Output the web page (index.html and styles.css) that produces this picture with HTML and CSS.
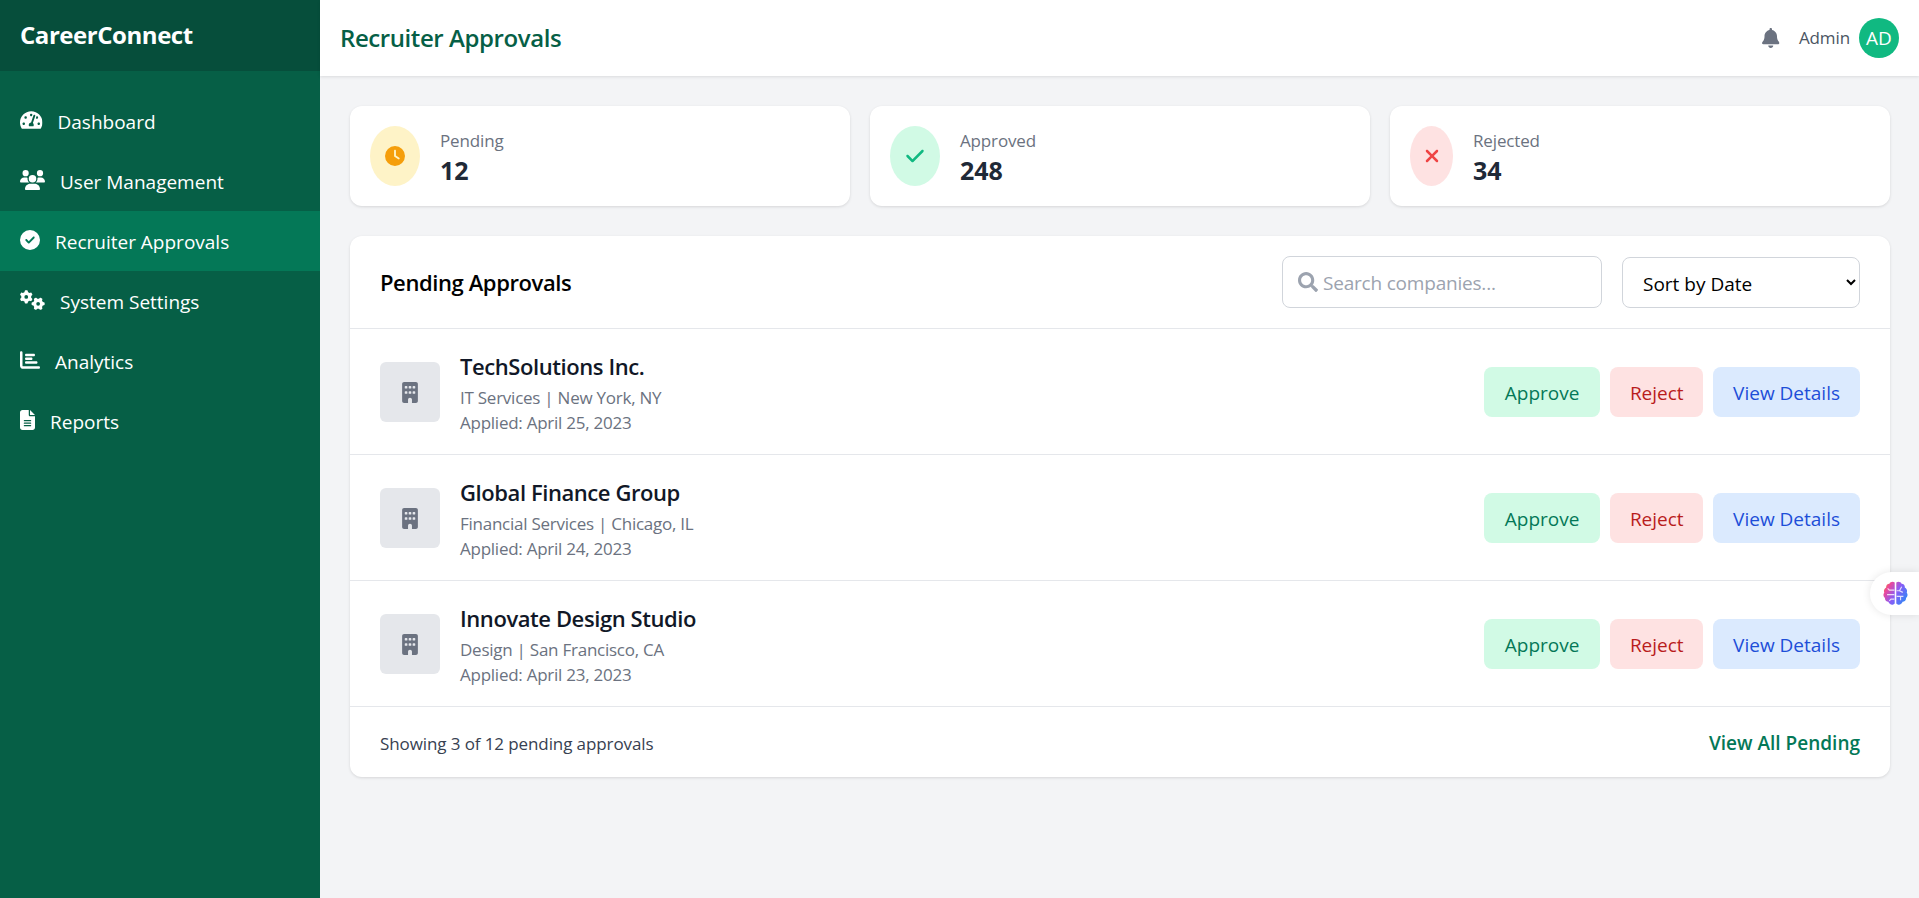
FILE: index.html
```html
<!DOCTYPE html>
<html lang="en">
<head>
  <meta charset="UTF-8">
  <title>Recruiter Approvals</title>
  <link rel="stylesheet" href="styles.css">
</head>
<body>

<svg class="icon-defs" width="0" height="0">
  <defs>
    <linearGradient id="brainFill" x1="0" y1="0" x2="1" y2="0.6">
      <stop offset="0" stop-color="#f59e0b"/>
      <stop offset="0.25" stop-color="#ec4899"/>
      <stop offset="0.6" stop-color="#8b5cf6"/>
      <stop offset="1" stop-color="#3b82f6"/>
    </linearGradient>
    <symbol id="i-gauge" viewBox="0 0 576 512"><path d="M288 32C128.94 32 0 160.94 0 320c0 52.8 14.25 102.26 39.06 144.8 5.61 9.62 16.3 15.2 27.44 15.2h443c11.14 0 21.83-5.58 27.44-15.2C561.75 422.26 576 372.8 576 320c0-159.06-128.94-288-288-288zm0 64c14.71 0 26.58 10.13 30.32 23.65-1.11 2.26-2.64 4.23-3.45 6.67l-9.22 27.67c-5.13 3.49-10.97 6.01-17.64 6.01-17.67 0-32-14.33-32-32S270.33 96 288 96zM96 384c-17.67 0-32-14.33-32-32s14.33-32 32-32 32 14.33 32 32-14.33 32-32 32zm48-160c-17.67 0-32-14.33-32-32s14.33-32 32-32 32 14.33 32 32-14.33 32-32 32zm246.77-72.41l-61.33 184C343.13 347.33 352 364.54 352 384c0 11.72-3.38 22.55-8.88 32H232.88c-5.5-9.45-8.88-20.28-8.88-32 0-33.94 26.5-61.43 59.9-63.59l61.34-184.01c4.17-12.56 17.73-19.45 30.36-15.17 12.57 4.19 19.35 17.79 15.17 30.36zm14.66 57.2l15.52-46.55c3.47-1.29 7.13-2.23 11.05-2.23 17.67 0 32 14.33 32 32s-14.33 32-32 32c-11.38-.01-20.89-6.28-26.57-15.22zM480 384c-17.67 0-32-14.33-32-32s14.33-32 32-32 32 14.33 32 32-14.33 32-32 32z"/></symbol>
    <symbol id="i-users" viewBox="0 0 640 512"><path d="M144 0a80 80 0 1 1 0 160A80 80 0 1 1 144 0zM512 0a80 80 0 1 1 0 160A80 80 0 1 1 512 0zM0 298.700C0 239.800 47.800 192 106.700 192h42.700c15.900 0 31 3.500 44.600 9.700c-1.300 7.200-1.900 14.700-1.900 22.300c0 38.200 16.800 72.500 43.300 96c-.2 0-.4 0-.7 0H21.300C9.600 320 0 310.400 0 298.700zM405.300 320c-.2 0-.4 0-.7 0c26.600-23.500 43.300-57.800 43.300-96c0-7.600-.7-15-1.900-22.300c13.600-6.300 28.700-9.700 44.600-9.700h42.700C592.200 192 640 239.800 640 298.700c0 11.800-9.600 21.300-21.300 21.300H405.300zM224 224a96 96 0 1 1 192 0 96 96 0 1 1 -192 0zM128 485.300C128 411.700 187.700 352 261.300 352H378.700C452.300 352 512 411.700 512 485.300c0 14.700-11.900 26.700-26.700 26.700H154.700c-14.700 0-26.700-11.900-26.700-26.700z"/></symbol>
    <symbol id="i-circle-check" viewBox="0 0 512 512"><path d="M256 512A256 256 0 1 0 256 0a256 256 0 1 0 0 512zM369 209L241 337c-9.4 9.4-24.6 9.4-33.9 0l-64-64c-9.4-9.4-9.4-24.6 0-33.9s24.6-9.4 33.9 0l47 47L335 175c9.4-9.4 24.6-9.4 33.9 0s9.4 24.6 0 33.9z"/></symbol>
    <symbol id="i-gears" viewBox="0 0 640 512"><path d="M308.500 135.300c7.100-6.300 9.900-16.200 6.200-25c-2.300-5.300-4.800-10.500-7.600-15.500L304 89.400c-3-5-6.300-9.900-9.800-14.600c-5.700-7.600-15.700-10.100-24.700-7.100l-28.200 9.300c-10.700-8.800-23-16-36.200-20.900L199 27.100c-1.900-9.300-9.100-16.700-18.500-17.800C173.900 8.400 167.200 8 160.400 8h-.7c-6.800 0-13.500 .4-20.100 1.200c-9.400 1.100-16.600 8.600-18.500 17.800L115 56.100c-13.300 5-25.500 12.100-36.200 20.900L50.500 67.800c-9-3-19-.5-24.700 7.100c-3.500 4.700-6.800 9.600-9.900 14.600l-3 5.300c-2.800 5-5.300 10.200-7.600 15.600c-3.700 8.700-.9 18.600 6.200 25l22.200 19.800C32.600 161.900 32 168.900 32 176s.6 14.100 1.700 20.900L11.500 216.700c-7.100 6.300-9.900 16.200-6.200 25c2.300 5.300 4.800 10.500 7.600 15.600l3 5.200c3 5.100 6.300 9.900 9.900 14.600c5.700 7.600 15.700 10.100 24.700 7.100l28.200-9.300c10.700 8.800 23 16 36.200 20.900l6.100 29.100c1.900 9.300 9.100 16.700 18.500 17.800c6.700 .8 13.500 1.200 20.400 1.200s13.700-.4 20.400-1.200c9.400-1.100 16.600-8.600 18.500-17.800l6.100-29.100c13.300-5 25.500-12.100 36.200-20.900l28.200 9.300c9 3 19 .5 24.700-7.100c3.500-4.700 6.800-9.500 9.800-14.600l3.100-5.400c2.800-5 5.300-10.200 7.600-15.500c3.700-8.700 .9-18.600-6.200-25l-22.200-19.800c1.100-6.800 1.700-13.800 1.700-20.900s-.6-14.100-1.700-20.900l22.200-19.800zM112 176a48 48 0 1 1 96 0 48 48 0 1 1 -96 0zM504.700 500.500c6.300 7.100 16.200 9.900 25 6.200c5.300-2.300 10.500-4.800 15.500-7.600l5.400-3.100c5-3 9.900-6.300 14.600-9.800c7.600-5.700 10.100-15.700 7.100-24.700l-9.300-28.200c8.800-10.700 16-23 20.900-36.200l29.100-6.100c9.300-1.900 16.700-9.100 17.800-18.500c.8-6.700 1.200-13.500 1.200-20.400s-.4-13.700-1.200-20.400c-1.100-9.400-8.600-16.600-17.800-18.500L583.900 307c-5-13.300-12.100-25.500-20.900-36.200l9.300-28.200c3-9 .5-19-7.100-24.700c-4.700-3.500-9.600-6.800-14.600-9.900l-5.300-3c-5-2.800-10.200-5.300-15.600-7.600c-8.700-3.700-18.600-.9-25 6.200l-19.800 22.200c-6.800-1.100-13.800-1.700-20.900-1.700s-14.100 .6-20.900 1.700l-19.800-22.200c-6.300-7.100-16.200-9.900-25-6.200c-5.300 2.300-10.500 4.800-15.600 7.600l-5.200 3c-5.100 3-9.900 6.300-14.600 9.900c-7.600 5.700-10.100 15.700-7.100 24.700l9.300 28.200c-8.800 10.700-16 23-20.900 36.200L315.100 313c-9.300 1.900-16.700 9.100-17.800 18.500c-.8 6.700-1.200 13.500-1.200 20.400s.4 13.700 1.200 20.400c1.100 9.400 8.600 16.600 17.800 18.500l29.100 6.100c5 13.300 12.100 25.500 20.900 36.200l-9.300 28.200c-3 9-.5 19 7.100 24.700c4.700 3.500 9.500 6.800 14.600 9.800l5.400 3.100c5 2.800 10.200 5.300 15.500 7.600c8.700 3.700 18.600 .9 25-6.200l19.800-22.200c6.800 1.100 13.800 1.700 20.900 1.700s14.100-.6 20.900-1.700l19.800 22.200zM464 304a48 48 0 1 1 0 96 48 48 0 1 1 0-96z"/></symbol>
    <symbol id="i-chart" viewBox="0 0 512 512"><path d="M32 32c17.700 0 32 14.300 32 32V400c0 8.800 7.200 16 16 16H480c17.700 0 32 14.300 32 32s-14.300 32-32 32H80c-44.200 0-80-35.800-80-80V64C0 46.300 14.300 32 32 32zm96 96c0-17.700 14.300-32 32-32l192 0c17.700 0 32 14.300 32 32s-14.300 32-32 32l-192 0c-17.700 0-32-14.300-32-32zm32 64H288c17.700 0 32 14.300 32 32s-14.300 32-32 32H160c-17.700 0-32-14.300-32-32s14.300-32 32-32zm0 96H416c17.700 0 32 14.300 32 32s-14.300 32-32 32H160c-17.700 0-32-14.300-32-32s14.300-32 32-32z"/></symbol>
    <symbol id="i-file" viewBox="0 0 384 512"><path d="M64 0C28.700 0 0 28.700 0 64V448c0 35.300 28.700 64 64 64H320c35.300 0 64-28.700 64-64V160H256c-17.700 0-32-14.300-32-32V0H64zM256 0V128H384L256 0zM112 256H272c8.800 0 16 7.200 16 16s-7.200 16-16 16H112c-8.800 0-16-7.200-16-16s7.200-16 16-16zm0 64H272c8.800 0 16 7.200 16 16s-7.200 16-16 16H112c-8.800 0-16-7.200-16-16s7.200-16 16-16zm0 64H272c8.800 0 16 7.200 16 16s-7.200 16-16 16H112c-8.800 0-16-7.200-16-16s7.200-16 16-16z"/></symbol>
    <symbol id="i-bell" viewBox="0 0 448 512"><path d="M224 0c-17.700 0-32 14.300-32 32V51.200C119 66 64 130.600 64 208v18.800c0 47-17.300 92.400-48.500 127.600l-7.400 8.300c-8.400 9.400-10.400 22.900-5.300 34.400S19.400 416 32 416H416c12.600 0 24-7.400 29.200-18.900s3.100-25-5.300-34.400l-7.400-8.300C401.300 319.200 384 273.900 384 226.800V208c0-77.400-55-142-128-156.800V32c0-17.700-14.300-32-32-32zm45.300 493.300c12-12 18.700-28.300 18.700-45.300H224 160c0 17 6.700 33.300 18.700 45.300s28.300 18.700 45.300 18.700s33.300-6.700 45.300-18.700z"/></symbol>
    <symbol id="i-clock" viewBox="0 0 512 512"><path d="M256 0a256 256 0 1 1 0 512A256 256 0 1 1 256 0zM232 120V256c0 8 4 15.500 10.700 20l96 64c11 7.400 25.900 4.400 33.300-6.700s4.400-25.900-6.700-33.300L280 243.200V120c0-13.300-10.700-24-24-24s-24 10.700-24 24z"/></symbol>
    <symbol id="i-check" viewBox="0 0 448 512"><path d="M438.600 105.400c12.500 12.500 12.500 32.800 0 45.300l-256 256c-12.500 12.500-32.800 12.500-45.300 0l-128-128c-12.500-12.500-12.500-32.800 0-45.300s32.800-12.500 45.300 0L160 338.700 393.400 105.400c12.500-12.500 32.800-12.500 45.300 0z"/></symbol>
    <symbol id="i-xmark" viewBox="0 0 384 512"><path d="M342.600 150.600c12.500-12.500 12.500-32.800 0-45.300s-32.800-12.500-45.300 0L192 210.700 86.600 105.400c-12.500-12.500-32.800-12.500-45.300 0s-12.500 32.800 0 45.300L146.700 256 41.400 361.400c-12.500 12.500-12.500 32.800 0 45.300s32.800 12.500 45.300 0L192 301.300 297.400 406.600c12.500 12.500 32.800 12.500 45.300 0s12.500-32.800 0-45.300L237.300 256 342.600 150.600z"/></symbol>
    <symbol id="i-search" viewBox="0 0 512 512"><path d="M505 442.700L405.300 343c-4.500-4.500-10.600-7-17-7H372c27.600-35.300 44-79.700 44-128C416 93.100 322.900 0 208 0S0 93.100 0 208s93.100 208 208 208c48.300 0 92.700-16.400 128-44v16.300c0 6.400 2.500 12.500 7 17l99.700 99.700c9.400 9.400 24.600 9.400 33.900 0l28.300-28.300c9.400-9.400 9.400-24.600.1-34zM208 336c-70.700 0-128-57.200-128-128 0-70.700 57.200-128 128-128 70.700 0 128 57.200 128 128 0 70.700-57.200 128-128 128z"/></symbol>
    <symbol id="i-building" viewBox="0 0 384 512"><path d="M48 0C21.500 0 0 21.500 0 48V464c0 26.500 21.500 48 48 48h96V432c0-26.500 21.500-48 48-48s48 21.500 48 48v80h96c26.500 0 48-21.500 48-48V48c0-26.500-21.500-48-48-48H48zM64 240c0-8.800 7.200-16 16-16h32c8.800 0 16 7.200 16 16v32c0 8.800-7.200 16-16 16H80c-8.800 0-16-7.200-16-16V240zm112-16h32c8.800 0 16 7.200 16 16v32c0 8.800-7.200 16-16 16H176c-8.800 0-16-7.200-16-16V240c0-8.800 7.200-16 16-16zm80 16c0-8.800 7.200-16 16-16h32c8.800 0 16 7.200 16 16v32c0 8.800-7.200 16-16 16H272c-8.800 0-16-7.200-16-16V240zM80 96h32c8.800 0 16 7.200 16 16v32c0 8.800-7.200 16-16 16H80c-8.800 0-16-7.200-16-16V112c0-8.800 7.200-16 16-16zm80 16c0-8.800 7.200-16 16-16h32c8.800 0 16 7.200 16 16v32c0 8.800-7.200 16-16 16H176c-8.800 0-16-7.200-16-16V112zM272 96h32c8.800 0 16 7.200 16 16v32c0 8.800-7.200 16-16 16H272c-8.800 0-16-7.200-16-16V112c0-8.800 7.200-16 16-16z"/></symbol>
  </defs>
</svg>

<div class="layout">
  <aside class="sidebar">
    <div class="brand">CareerConnect</div>
    <nav class="nav">
      <a class="nav-item"><svg class="nav-icon wide-s"><use href="#i-gauge"/></svg>Dashboard</a>
      <a class="nav-item"><svg class="nav-icon wide-l"><use href="#i-users"/></svg>User Management</a>
      <a class="nav-item active"><svg class="nav-icon"><use href="#i-circle-check"/></svg>Recruiter Approvals</a>
      <a class="nav-item"><svg class="nav-icon wide-l"><use href="#i-gears"/></svg>System Settings</a>
      <a class="nav-item"><svg class="nav-icon"><use href="#i-chart"/></svg>Analytics</a>
      <a class="nav-item"><svg class="nav-icon narrow"><use href="#i-file"/></svg>Reports</a>
    </nav>
  </aside>

  <div class="content">
    <header class="topbar">
      <h1 class="page-title">Recruiter Approvals</h1>
      <div class="topbar-right">
        <svg class="bell"><use href="#i-bell"/></svg>
        <div class="user">
          <span class="user-name">Admin</span>
          <span class="avatar">AD</span>
        </div>
      </div>
    </header>

    <main class="main">
      <section class="stats">
        <div class="stat-card">
          <div class="stat-icon pending"><svg><use href="#i-clock"/></svg></div>
          <div class="stat-text">
            <div class="stat-label">Pending</div>
            <div class="stat-value">12</div>
          </div>
        </div>
        <div class="stat-card">
          <div class="stat-icon approved"><svg><use href="#i-check"/></svg></div>
          <div class="stat-text">
            <div class="stat-label">Approved</div>
            <div class="stat-value">248</div>
          </div>
        </div>
        <div class="stat-card">
          <div class="stat-icon rejected"><svg><use href="#i-xmark"/></svg></div>
          <div class="stat-text">
            <div class="stat-label">Rejected</div>
            <div class="stat-value">34</div>
          </div>
        </div>
      </section>

      <section class="panel">
        <div class="panel-header">
          <h2 class="panel-title">Pending Approvals</h2>
          <div class="panel-tools">
            <label class="search">
              <svg class="search-icon"><use href="#i-search"/></svg>
              <input type="text" placeholder="Search companies...">
            </label>
            <select class="sort">
              <option>Sort by Date</option>
              <option>Sort by Name</option>
            </select>
          </div>
        </div>

        <div class="row">
          <div class="logo"><svg><use href="#i-building"/></svg></div>
          <div class="company">
            <h3 class="company-name">TechSolutions Inc.</h3>
            <p class="company-meta">IT Services | New York, NY</p>
            <p class="company-meta">Applied: April 25, 2023</p>
          </div>
          <div class="actions">
            <button class="btn btn-approve">Approve</button>
            <button class="btn btn-reject">Reject</button>
            <button class="btn btn-view">View Details</button>
          </div>
        </div>

        <div class="row">
          <div class="logo"><svg><use href="#i-building"/></svg></div>
          <div class="company">
            <h3 class="company-name">Global Finance Group</h3>
            <p class="company-meta">Financial Services | Chicago, IL</p>
            <p class="company-meta">Applied: April 24, 2023</p>
          </div>
          <div class="actions">
            <button class="btn btn-approve">Approve</button>
            <button class="btn btn-reject">Reject</button>
            <button class="btn btn-view">View Details</button>
          </div>
        </div>

        <div class="row">
          <div class="logo"><svg><use href="#i-building"/></svg></div>
          <div class="company">
            <h3 class="company-name">Innovate Design Studio</h3>
            <p class="company-meta">Design | San Francisco, CA</p>
            <p class="company-meta">Applied: April 23, 2023</p>
          </div>
          <div class="actions">
            <button class="btn btn-approve">Approve</button>
            <button class="btn btn-reject">Reject</button>
            <button class="btn btn-view">View Details</button>
          </div>
        </div>

        <div class="panel-footer">
          <span class="showing">Showing 3 of 12 pending approvals</span>
          <a class="view-all">View All Pending</a>
        </div>
      </section>
    </main>
  </div>
</div>

<!-- floating assistant tab on the window edge -->
<div class="float-tab">
  <svg viewBox="0 0 24 24" width="27" height="27">
    <path fill="url(#brainFill)" d="M11.300 2.200C9.600 1 7.400 1.600 6.600 3.300 4.800 3.300 3.500 4.800 3.700 6.600 2 7.400 1.200 9.400 2 11.100c-1.200 1.500-.9 3.700.6 4.800-.1 1.900 1.300 3.400 3.100 3.500.6 1.900 2.500 3 4.300 2.400.6-.2 1-.5 1.300-.9V2.200zM12.700 2.200c1.700-1.200 3.900-.6 4.700 1.100 1.800 0 3.100 1.500 2.900 3.300 1.700.8 2.500 2.800 1.700 4.500 1.200 1.500.9 3.700-.6 4.800.1 1.900-1.300 3.400-3.100 3.500-.6 1.900-2.500 3-4.300 2.400-.6-.2-1-.5-1.300-.9V2.200z"/>
    <path class="brain-lines" d="M11 9H6.500L5 7.500M11 13H4.500M11 17H8l-1.500 1.500M13 9.500h2.500L17.500 6M15.500 9.500l3 1.500M13 14.500h6M16.500 14.500v3.500"/>
  </svg>
</div>

</body>
</html>
```

FILE: styles.css
```css
* {
  box-sizing: border-box;
}

body {
  margin: 0;
  font-family: "Open Sans", "Noto Sans", sans-serif;
  font-size: 19px;
  line-height: 1.6;
  background: #f3f4f6;
  color: #1f2937;
  overflow: hidden;
}

.icon-defs {
  position: absolute;
}

.layout {
  display: flex;
  min-height: 100vh;
}

/* sidebar */
.sidebar {
  width: 320px;
  flex-shrink: 0;
  background: #065f46;
  color: white;
}

.brand {
  height: 71px;
  padding: 0 20px;
  display: flex;
  align-items: center;
  background: #064e3b;
  font-size: 24px;
  font-weight: 700;
  letter-spacing: -0.45px;
}

.nav {
  padding-top: 20px;
}

.nav-item {
  height: 60px;
  padding: 2px 20px 0;
  display: flex;
  align-items: center;
  color: white;
}

.nav-item.active {
  background: #047857;
}

.nav-icon {
  width: 20px;
  height: 20px;
  margin-right: 15px;
  margin-top: -4px;
  fill: white;
  flex-shrink: 0;
}

.nav-icon.wide-s {
  width: 22.5px;
}

.nav-icon.wide-l {
  width: 25px;
}

.nav-icon.narrow {
  width: 15px;
}

/* top bar */
.content {
  flex: 1;
  min-width: 0;
}

.topbar {
  height: 76px;
  padding: 0 20px;
  display: flex;
  align-items: center;
  justify-content: space-between;
  background: white;
  box-shadow: 0 1px 3px rgba(0, 0, 0, 0.1);
}

.page-title {
  margin: 0;
  font-size: 24px;
  font-weight: 600;
  letter-spacing: -0.42px;
  color: #065f46;
}

.topbar-right {
  display: flex;
  align-items: center;
  gap: 19px;
}

.bell {
  width: 17.5px;
  height: 20px;
  fill: #6b7280;
}

.user {
  display: flex;
  align-items: center;
  gap: 9px;
}

.user-name {
  font-size: 17px;
  letter-spacing: -0.1px;
  color: #4b5563;
}

.avatar {
  width: 40px;
  height: 40px;
  border-radius: 50%;
  display: flex;
  align-items: center;
  justify-content: center;
  background: #10b981;
  color: white;
}

/* stats */
.main {
  padding: 30px 29px 30px 30px;
}

.stats {
  display: grid;
  grid-template-columns: repeat(3, 1fr);
  gap: 20px;
  margin-bottom: 30px;
}

.stat-card {
  display: flex;
  align-items: center;
  gap: 20px;
  height: 100px;
  padding: 20px;
  background: white;
  border-radius: 12px;
  box-shadow: 0 1px 3px rgba(0, 0, 0, 0.12);
}

.stat-icon {
  width: 50px;
  height: 60px;
  border-radius: 50%;
  display: flex;
  align-items: center;
  justify-content: center;
  flex-shrink: 0;
}

.stat-icon svg {
  width: 20px;
  height: 20px;
}

.stat-icon.pending {
  background: #fef3c7;
  fill: #f59e0b;
}

.stat-icon.approved {
  background: #d1fae5;
  fill: #10b981;
}

.stat-icon.rejected {
  width: 43px;
  background: #fee2e2;
  fill: #ef4444;
}

.stat-text {
  padding-top: 1px;
}

.stat-label {
  font-size: 17px;
  line-height: 26px;
  letter-spacing: -0.15px;
  color: #6b7280;
}

.stat-value {
  font-size: 25px;
  font-weight: 700;
  line-height: 32px;
  color: #1f2937;
}

/* approvals panel */
.panel {
  background: white;
  border-radius: 12px;
  box-shadow: 0 1px 3px rgba(0, 0, 0, 0.12);
}

.panel-header {
  display: flex;
  align-items: center;
  justify-content: space-between;
  padding: 20px 30px;
  border-bottom: 1px solid #e5e7eb;
}

.panel-title {
  margin: 0;
  padding-top: 2px;
  font-size: 22px;
  font-weight: 600;
  letter-spacing: -0.4px;
  color: black;
}

.panel-tools {
  display: flex;
  align-items: center;
  gap: 20px;
}

.search {
  width: 320px;
  height: 52px;
  padding: 0 15px;
  display: flex;
  align-items: center;
  gap: 5px;
  border: 1px solid #d1d5db;
  border-radius: 8px;
}

.search-icon {
  width: 20px;
  height: 20px;
  fill: #9ca3af;
  flex-shrink: 0;
}

.search input {
  flex: 1;
  min-width: 0;
  border: none;
  outline: none;
  padding: 2px 0 0;
  font: inherit;
  letter-spacing: -0.2px;
}

.search input::placeholder {
  color: #9ca3af;
}

.sort {
  width: 238px;
  height: 51px;
  padding: 3px 15px 0 16px;
  border: 1px solid #d1d5db;
  border-radius: 8px;
  background: white;
  color: black;
  font: inherit;
}

.row {
  display: flex;
  align-items: center;
  gap: 20px;
  padding: 20px 30px 19px;
  border-bottom: 1px solid #e5e7eb;
}

.logo {
  width: 60px;
  height: 60px;
  border-radius: 6px;
  display: flex;
  align-items: center;
  justify-content: center;
  background: #e5e7eb;
  flex-shrink: 0;
}

.logo svg {
  width: 16px;
  height: 21px;
  fill: #6b7280;
}

.company {
  flex: 1;
}

.company-name {
  margin: 0;
  padding-bottom: 2px;
  font-size: 22px;
  font-weight: 600;
  line-height: 34px;
  letter-spacing: -0.42px;
  color: #111827;
}

.company-meta {
  margin: 0;
  font-size: 17px;
  line-height: 25px;
  letter-spacing: -0.25px;
  color: #6b7280;
}

.actions {
  display: flex;
  gap: 10px;
}

.btn {
  height: 50px;
  padding: 2px 20px 0;
  border: none;
  border-radius: 8px;
  font: inherit;
  cursor: pointer;
}

.btn-approve {
  padding: 2px 21px 0;
  background: #d1fae5;
  color: #047857;
}

.btn-reject {
  padding: 2px 19.5px 0;
  background: #fee2e2;
  color: #b91c1c;
}

.btn-view {
  background: #dbeafe;
  color: #1d4ed8;
}

.panel-footer {
  height: 70px;
  padding: 2px 30px 0;
  display: flex;
  align-items: center;
  justify-content: space-between;
}

.showing {
  padding-top: 2px;
  font-size: 17px;
  letter-spacing: -0.1px;
  color: #374151;
}

.view-all {
  font-weight: 600;
  color: #047857;
}

/* floating tab */
.float-tab {
  position: fixed;
  right: 0;
  top: 572px;
  width: 49px;
  height: 43px;
  padding-left: 12px;
  display: flex;
  align-items: center;
  background: white;
  border-radius: 22px 0 0 22px;
  box-shadow: 0 0 8px rgba(0, 0, 0, 0.1);
}

.brain-lines {
  fill: none;
  stroke: white;
  stroke-width: 1;
  opacity: 0.8;
}
```
